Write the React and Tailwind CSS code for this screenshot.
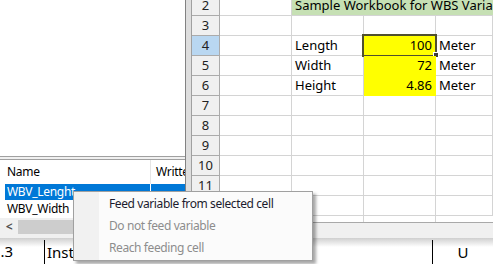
import React from 'react';

const GRID = "'Noto Sans', 'Liberation Sans', sans-serif";
const UI = "'Noto Sans', 'Liberation Sans', sans-serif";

function RowHead({ n, active }) {
  return (
    <div
      className={
        active
          ? 'w-[28px] shrink-0 border-r border-b border-[#ababab] bg-[#b9d7f1] flex items-center justify-center text-[13px] text-[#222]'
          : 'w-[28px] shrink-0 border-r border-b border-[#ababab] bg-[#f0f0f0] flex items-center justify-center text-[13px] text-[#222]'
      }
    >
      {n}
    </div>
  );
}

function Cell({ children, right, yellow, last }) {
  let cls = 'shrink-0 border-r border-b flex items-center px-[3px] text-[13px] text-black whitespace-nowrap overflow-visible';
  cls += last ? ' flex-1' : ' w-[72px]';
  cls += yellow ? ' bg-[#ffff00] border-[#ffff00]' : ' border-[#d4d4d4]';
  if (right) cls += ' justify-end';
  return <div className={cls}>{children}</div>;
}

function GridRow({ n, active, children }) {
  return (
    <div className="flex h-[20px] shrink-0">
      <RowHead n={n} active={active} />
      {children}
    </div>
  );
}

function Sheet() {
  const data = {
    4: ['Length', '100'],
    5: ['Width', '72'],
    6: ['Height', '4.86'],
  };
  return (
    <div className="flex-1 flex flex-col overflow-hidden" style={{ fontFamily: GRID }}>
      <div className="flex-1 flex flex-col -mt-[4px] overflow-hidden">
        <GridRow n={2}>
          <Cell />
          <div className="flex-1 border-b border-[#d4d4d4] bg-[#c6e0b4] flex items-center px-[3px] text-[13px] text-black whitespace-nowrap overflow-hidden">
            Sample Workbook for WBS Variables
          </div>
        </GridRow>
        {[3, 4, 5, 6, 7, 8, 9, 10, 11, 12].map((n) =>
          data[n] ? (
            <GridRow key={n} n={n} active={n === 4}>
              <Cell />
              <Cell>{data[n][0]}</Cell>
              <div className="relative w-[72px] shrink-0 border-r border-b border-[#ffff00] bg-[#ffff00] flex items-center justify-end px-[3px] text-[13px] text-black">
                {data[n][1]}
                {n === 4 && (
                  <>
                    <div className="absolute left-[-2px] top-[-2px] w-[75px] h-[23px] border-2 border-[#50502e]" />
                    <div className="absolute left-[69px] top-[16px] w-[6px] h-[6px] bg-[#3c3c3c] border border-white" />
                  </>
                )}
              </div>
              <Cell last>Meter</Cell>
            </GridRow>
          ) : (
            <GridRow key={n} n={n}>
              <Cell />
              <Cell />
              <Cell />
              <Cell last />
            </GridRow>
          )
        )}
        <div className="flex flex-1">
          <div className="w-[28px] shrink-0 border-r border-[#ababab] bg-[#f0f0f0]" />
          <div className="w-[72px] shrink-0 border-r border-[#d4d4d4]" />
          <div className="w-[72px] shrink-0 border-r border-[#d4d4d4]" />
          <div className="w-[72px] shrink-0 border-r border-[#d4d4d4]" />
          <div className="flex-1" />
        </div>
      </div>
      <div className="h-[16px] shrink-0 border-t border-[#a9a9a9] bg-[#f0f0f0]" />
    </div>
  );
}

function LeftPanel() {
  return (
    <div className="w-[186px] shrink-0 flex flex-col border-r border-[#828282]" style={{ fontFamily: UI }}>
      <div className="h-[157px] shrink-0 bg-white border-b border-[#a0a0a0]" />
      <div className="h-[2px] shrink-0 bg-[#f0f0f0]" />
      <div className="flex-1 flex flex-col bg-white border-t border-[#a0a0a0] tracking-[-0.3px]">
        <div className="h-[24px] shrink-0 flex text-[12px] text-black">
          <div className="w-[151px] shrink-0 flex items-center pl-[7px] border-r border-[#e5e5e5]">Name</div>
          <div className="flex-1 flex items-center pl-[5px] overflow-hidden whitespace-nowrap">Written</div>
        </div>
        <div className="h-[16px] shrink-0 flex ml-[5px] text-[12px]">
          <div className="w-[146px] shrink-0 bg-[#0078d7] text-white flex items-center pl-[2px] border-r border-white">WBV_Lenght</div>
          <div className="flex-1 bg-[#0078d7]" />
        </div>
        <div className="h-[18px] shrink-0 flex items-center pl-[7px] text-[12px] text-black">WBV_Width</div>
        <div className="h-[18px] shrink-0 flex items-center bg-[#f0f0f0]">
          <div className="w-[18px] shrink-0 flex items-center justify-center text-[#505050] text-[12px] font-bold">&lt;</div>
          <div className="flex-1 h-[14px] bg-[#cdcdcd]" />
        </div>
        <div className="flex-1 bg-[#f0f0f0]" />
      </div>
    </div>
  );
}

function ContextMenu() {
  return (
    <div
      className="absolute left-[73px] top-[191px] w-[240px] h-[70px] border border-[#a0a0a0] bg-[#fbfbfb] shadow-[3px_3px_3px_rgba(0,0,0,0.35)] flex"
      style={{ fontFamily: UI }}
    >
      <div className="w-[25px] shrink-0 bg-[#f1f1f1]" />
      <div className="flex-1 flex flex-col pt-[1px] text-[12px] tracking-[-0.4px]">
        <div className="h-[22px] flex items-center pl-[10px] text-[#1c1b2e]">Feed variable from selected cell</div>
        <div className="h-[22px] flex items-center pl-[10px] text-[#8d8d8d]">Do not feed variable</div>
        <div className="h-[22px] flex items-center pl-[10px] text-[#8d8d8d]">Reach feeding cell</div>
      </div>
    </div>
  );
}

export default function App() {
  return (
    <div className="relative w-[493px] h-[264px] overflow-hidden bg-white flex flex-col">
      <div className="h-[238px] shrink-0 flex">
        <LeftPanel />
        <div className="w-[6px] shrink-0 bg-[#dedede] border-r border-[#a0a0a0]" />
        <Sheet />
      </div>
      <div
        className="flex-1 flex bg-[linear-gradient(to_bottom,#cfcfcf_0px,#ffffff_9px)] text-[15px] text-black"
        style={{ fontFamily: UI }}
      >
        <div className="w-[44px] shrink-0 flex items-center overflow-hidden">
          <span className="-ml-[8px]">1.3</span>
        </div>
        <div className="w-[388px] shrink-0 flex items-center pl-[2px] border-l border-black mt-[2px]">Installation</div>
        <div className="flex-1 flex items-center justify-center border-l border-black mt-[2px]">U</div>
      </div>
      <ContextMenu />
    </div>
  );
}
